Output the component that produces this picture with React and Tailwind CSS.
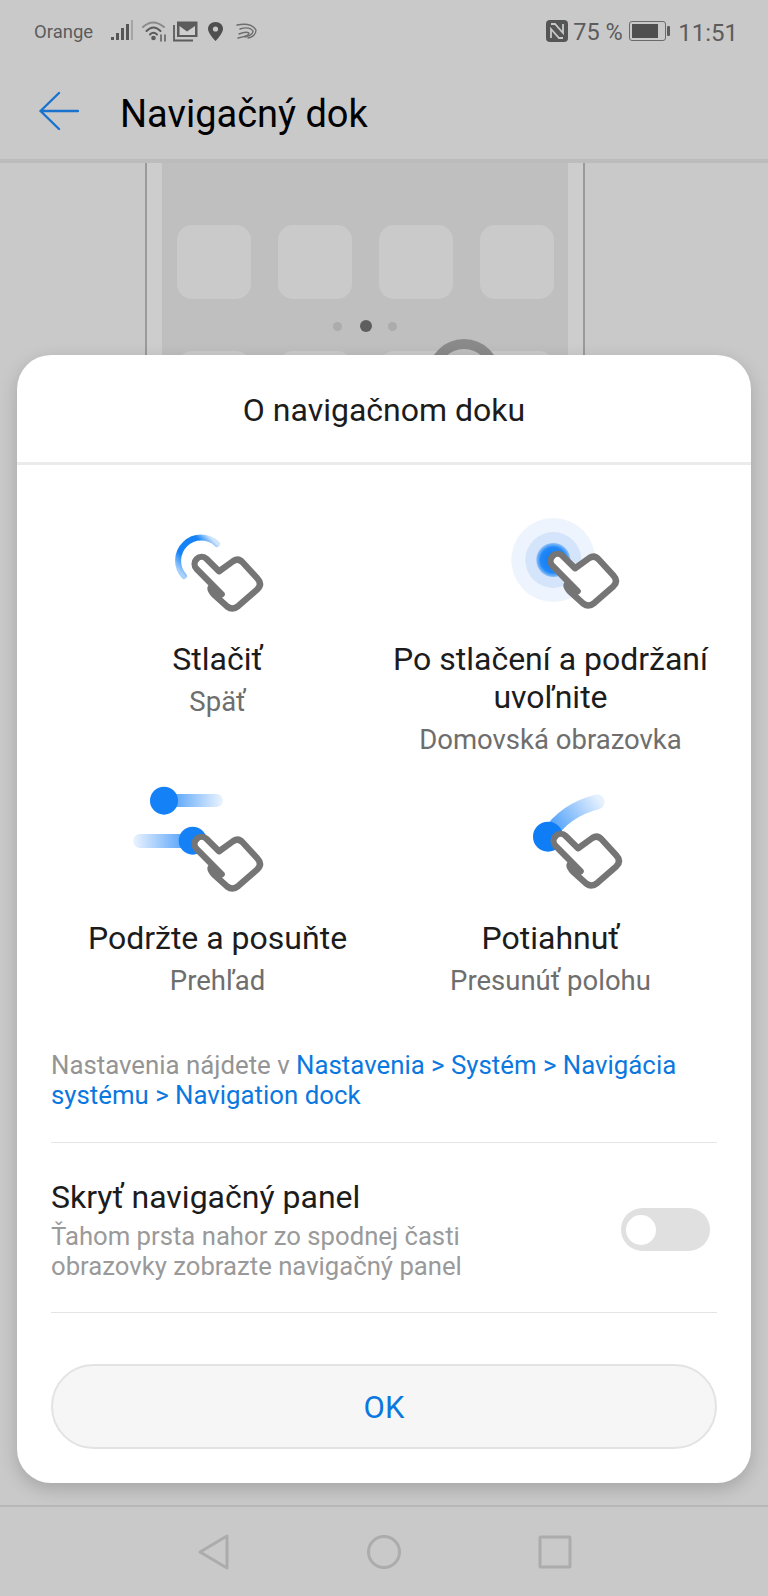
import React from "react";

const HAND =
  "M215 283 L140 207 A21 21 0 0 1 170 177 L207 214 L250 183 Q265 173 278 187 L322 235 Q338 252 322 268 L265 318 Q248 332 232 320 L192 284 Q172 262 190 258";

function Hand({ x, y }) {
  return (
    <g transform={`translate(${x} ${y}) scale(0.3333)`}>
      <path d={HAND} fill="#fff" stroke="#757575" strokeWidth="19" strokeLinecap="round" strokeLinejoin="round" />
    </g>
  );
}

function TapIcon() {
  return (
    <svg viewBox="0 0 333 140" className="w-full h-[140px] block">
      <defs>
        <linearGradient id="tapArc" gradientUnits="userSpaceOnUse" x1="67" y1="44" x2="34" y2="76">
          <stop offset="0" stopColor="#cfe4fd" />
          <stop offset="0.22" stopColor="#1583f7" />
          <stop offset="0.72" stopColor="#1583f7" />
          <stop offset="1" stopColor="#a9d0fb" />
        </linearGradient>
      </defs>
      <g transform="translate(99 0)">
        <path d="M34 76 A23 23 0 0 1 67 44" fill="none" stroke="url(#tapArc)" strokeWidth="6" strokeLinecap="round" />
      </g>
      <Hand x={99} y={0} />
    </svg>
  );
}

function HoldIcon() {
  return (
    <svg viewBox="0 0 333 140" className="w-full h-[140px] block">
      <defs>
        <radialGradient id="holdCore">
          <stop offset="0" stopColor="#0a78f5" />
          <stop offset="0.75" stopColor="#2188f7" />
          <stop offset="1" stopColor="#8fc0f8" />
        </radialGradient>
      </defs>
      <g transform="translate(111 5)">
        <circle cx="58.3" cy="55" r="42" fill="#eef4fd" />
        <circle cx="58.3" cy="55" r="28" fill="#d3e4fb" />
        <circle cx="58.3" cy="55" r="17" fill="url(#holdCore)" />
      </g>
      <Hand x={122} y={-3} />
    </svg>
  );
}

function SlideIcon() {
  return (
    <svg viewBox="0 0 333 140" className="w-full h-[140px] block">
      <defs>
        <linearGradient id="slideTop" x1="0" x2="1" y1="0" y2="0">
          <stop offset="0" stopColor="#3f97f8" />
          <stop offset="1" stopColor="#ecf4fe" />
        </linearGradient>
        <linearGradient id="slideBottom" x1="0" x2="1" y1="0" y2="0">
          <stop offset="0" stopColor="#ecf4fe" />
          <stop offset="1" stopColor="#3f97f8" />
        </linearGradient>
      </defs>
      <g transform="translate(69 -4)">
        <rect x="44" y="19" width="59" height="13" rx="6.5" fill="url(#slideTop)" />
        <circle cx="44" cy="25.7" r="14" fill="#1581f6" />
        <rect x="13" y="59" width="60" height="14" rx="7" fill="url(#slideBottom)" />
        <circle cx="72.7" cy="65.7" r="14" fill="#1581f6" />
      </g>
      <Hand x={99} y={1} />
    </svg>
  );
}

function DragIcon() {
  return (
    <svg viewBox="0 0 333 140" className="w-full h-[140px] block">
      <defs>
        <linearGradient id="dragTrail" gradientUnits="userSpaceOnUse" x1="40" y1="55" x2="90" y2="20">
          <stop offset="0" stopColor="#3f97f8" />
          <stop offset="1" stopColor="#e6f1fe" />
        </linearGradient>
      </defs>
      <g transform="translate(126 1)">
        <path d="M38 56 Q55 30 87 22" fill="none" stroke="url(#dragTrail)" strokeWidth="15" strokeLinecap="round" />
        <circle cx="38" cy="56.7" r="15" fill="#0f7ef6" />
      </g>
      <Hand x={125} y={-2} />
    </svg>
  );
}

function Gesture({ icon, title, sub }) {
  return (
    <div className="flex flex-col items-center text-center">
      {icon}
      <div className="text-[32px] leading-[38px] text-[#1c1c1c]">{title}</div>
      <div className="mt-[6px] text-[27.5px] leading-[35px] text-[#6e6e6e]">{sub}</div>
    </div>
  );
}

function StatusBar() {
  return (
    <div className="h-[62px] flex items-center justify-between pl-[34px] pr-[30px] text-[#5c5c5c]">
      <div className="flex items-center">
        <span className="text-[18.5px] w-[77px] pt-[4px]">Orange</span>
        {/* signal */}
        <svg width="22" height="22" viewBox="0 0 22 22" fill="#555">
          <rect x="0" y="17" width="3" height="3" />
          <rect x="5" y="13" width="3" height="7" />
          <rect x="10" y="8" width="3" height="12" />
          <rect x="15" y="4" width="3" height="16" />
          <rect x="20" y="0" width="2" height="20" fill="#a5a5a5" />
        </svg>
        {/* wifi */}
        <svg width="26" height="22" viewBox="0 0 26 22" fill="none" stroke="#5c5c5c" className="ml-[9px]" strokeLinecap="round">
          <path d="M1 7 Q11 -2 22 7" strokeWidth="2" stroke="#8a8a8a" />
          <path d="M4.5 11 Q11.5 4 18.5 11" strokeWidth="2" />
          <path d="M8 14.5 Q11.5 11 15 14.5" strokeWidth="2" />
          <circle cx="11.5" cy="18" r="2.3" fill="#5c5c5c" stroke="none" />
          <path d="M19 15 V21 M23 15 V21" strokeWidth="1.5" />
        </svg>
        {/* gmail stack */}
        <svg width="25" height="21" viewBox="0 0 25 21" fill="none" className="ml-[5px]">
          <path d="M1 4 V19.5 H20" stroke="#5c5c5c" strokeWidth="1.8" />
          <rect x="4" y="0.5" width="20.5" height="15.5" fill="#5c5c5c" />
          <path d="M6.5 14 V5 L14 10.5 L22 5 V14 Z" fill="#cfcfcf" />
        </svg>
        {/* location */}
        <svg width="15" height="19" viewBox="0 0 15 19" className="ml-[10px]">
          <path d="M7.5 0 C3 0 0 3.2 0 7 C0 11.5 7.5 19 7.5 19 C7.5 19 15 11.5 15 7 C15 3.2 12 0 7.5 0 Z" fill="#4f4f4f" />
          <circle cx="7.5" cy="7" r="2.6" fill="#c9c9c9" />
        </svg>
        {/* swiftkey */}
        <svg width="22" height="16" viewBox="0 0 22 16" fill="none" stroke="#6e6e6e" className="ml-[13px]" strokeLinecap="round">
          <path d="M1 2 Q15 -1 20 7 Q20 13 12 15" strokeWidth="1.4" />
          <path d="M4 6 Q13 3 17 8 Q17 12 9 14" strokeWidth="1.4" />
          <path d="M3 11 Q10 8 13 10 Q13 13 2 15" strokeWidth="1.4" />
        </svg>
      </div>
      <div className="flex items-center">
        <svg width="22" height="22" viewBox="0 0 22 22">
          <rect width="22" height="22" rx="4" fill="#555" />
          <path d="M5 4 H9 L17 13 V4 M17 18 H13 L5 9 V18" fill="none" stroke="#c9c9c9" strokeWidth="1.8" />
        </svg>
        <span className="ml-[5px] text-[23.5px] w-[56px] pt-[3px]">75 %</span>
        <div className="flex items-center">
          <div className="w-[37px] h-[20px] rounded-[3px] border border-[#6a6a6a] p-[2px]">
            <div className="w-[26px] h-full bg-[#4f4f4f]" />
          </div>
          <div className="ml-[1px] w-[3px] h-[10px] rounded-[1px] bg-[#5c5c5c]" />
        </div>
        <span className="ml-[8px] text-[24px] pt-[3px]">11:51</span>
      </div>
    </div>
  );
}

function Background() {
  return (
    <div className="flex-1 flex flex-col min-h-0">
      <StatusBar />
      {/* Toolbar */}
      <div className="h-[101px] flex items-center pl-[39px] border-b-4 border-[#bcbcbc]">
        <svg width="40" height="40" viewBox="0 0 40 40" fill="none" stroke="#1a72cf" strokeWidth="2.4" strokeLinecap="round" strokeLinejoin="round">
          <path d="M20 2 L1.5 20 L20 38 M1.5 20 H39" />
        </svg>
        <span className="ml-[41px] text-[38px] text-black pt-[7px]">Navigačný dok</span>
      </div>
      {/* Phone illustration behind the dialog */}
      <div className="ml-[145px] w-[440px] h-[600px] border-x-2 border-[#9a9a9a] bg-[#cdcdcd] px-[15px]">
        <div className="relative h-full bg-[#bfbfbf] pl-[15px] pt-[62px]">
          <div className="grid grid-cols-[74px_74px_74px_74px] gap-x-[27px]">
            <div className="h-[74px] rounded-[15px] bg-[#cacaca]" />
            <div className="h-[74px] rounded-[15px] bg-[#cacaca]" />
            <div className="h-[74px] rounded-[15px] bg-[#cacaca]" />
            <div className="h-[74px] rounded-[15px] bg-[#cacaca]" />
          </div>
          <div className="flex items-center mt-[21px] ml-[156px]">
            <div className="w-[9px] h-[9px] rounded-full bg-[#acacac]" />
            <div className="ml-[18px] w-[12px] h-[12px] rounded-full bg-[#5e5e5e]" />
            <div className="ml-[16px] w-[9px] h-[9px] rounded-full bg-[#acacac]" />
          </div>
          <div className="grid grid-cols-[74px_74px_74px_74px] gap-x-[27px] mt-[19px]">
            <div className="h-[74px] rounded-[15px] bg-[#cacaca]" />
            <div className="h-[74px] rounded-[15px] bg-[#cacaca]" />
            <div className="h-[74px] rounded-[15px] bg-[#cacaca]" />
            <div className="h-[74px] rounded-[15px] bg-[#cacaca]" />
          </div>
          <div className="absolute left-[266px] top-[176px] w-[72px] h-[72px] rounded-full border-[10px] border-[#8a8a8a]" />
        </div>
      </div>
    </div>
  );
}

function Dialog() {
  return (
    <div className="absolute left-[17px] top-[355px] w-[734px] h-[1128px] rounded-[34px] bg-white shadow-[0_6px_18px_rgba(0,0,0,0.18)] flex flex-col">
      <div className="h-[110px] pt-[3px] flex items-center justify-center border-b-[3px] border-[#ebebeb] text-[32px] text-[#1c1c1c]">
        O navigačnom doku
      </div>
      <div className="px-[34px] pt-[35px]">
        <div className="grid grid-cols-2 gap-y-[22px]">
          <Gesture icon={<TapIcon />} title="Stlačiť" sub="Späť" />
          <Gesture
            icon={<HoldIcon />}
            title={
              <>
                Po stlačení a podržaní
                <br />
                uvoľnite
              </>
            }
            sub="Domovská obrazovka"
          />
          <Gesture icon={<SlideIcon />} title="Podržte a posuňte" sub="Prehľad" />
          <Gesture icon={<DragIcon />} title="Potiahnuť" sub="Presunúť polohu" />
        </div>
        <p className="mt-[52px] text-[25.8px] leading-[30px] text-[#949494]">
          Nastavenia nájdete v <span className="text-[#0b78e0]">Nastavenia &gt; Systém &gt; Navigácia</span>
          <br />
          <span className="text-[#0b78e0]">systému &gt; Navigation dock</span>
        </p>
        <div className="mt-[32px] border-y border-[#e4e4e4] pt-[35px] pb-[31px] flex items-center justify-between">
          <div>
            <div className="text-[32px] leading-[38px] text-[#1c1c1c]">Skryť navigačný panel</div>
            <div className="mt-[5px] text-[25.7px] leading-[30px] text-[#9a9a9a]">
              Ťahom prsta nahor zo spodnej časti
              <br />
              obrazovky zobrazte navigačný panel
            </div>
          </div>
          <div className="mr-[7px] w-[89px] h-[43px] rounded-full bg-[#e0e0e0] flex items-center pl-[5px]">
            <div className="w-[30px] h-[30px] rounded-full bg-white" />
          </div>
        </div>
        <button className="mt-[51px] w-full h-[85px] pt-[3px] rounded-full bg-[#f6f6f6] border-2 border-[#e3e3e3] text-[31px] text-[#0b78e0]">
          OK
        </button>
      </div>
    </div>
  );
}

export default function App() {
  return (
    <div className="relative w-[768px] h-[1596px] overflow-hidden flex flex-col bg-[#c9c9c9] [font-family:Roboto,sans-serif]">
      <Background />
      {/* Navigation bar */}
      <div className="h-[91px] border-t-2 border-[#b7b7b7] flex items-center justify-center gap-[137px]">
        <svg width="34" height="36" viewBox="0 0 34 36" fill="none" stroke="#acacac" strokeWidth="3" strokeLinejoin="round">
          <path d="M31 2 V34 L4 18 Z" />
        </svg>
        <svg width="34" height="36" viewBox="0 0 34 36" fill="none" stroke="#acacac" strokeWidth="3">
          <circle cx="17" cy="18" r="15.5" />
        </svg>
        <svg width="34" height="36" viewBox="0 0 34 36" fill="none" stroke="#acacac" strokeWidth="3" strokeLinejoin="round">
          <rect x="2" y="3" width="30" height="30" rx="1" />
        </svg>
      </div>
      <Dialog />
    </div>
  );
}
